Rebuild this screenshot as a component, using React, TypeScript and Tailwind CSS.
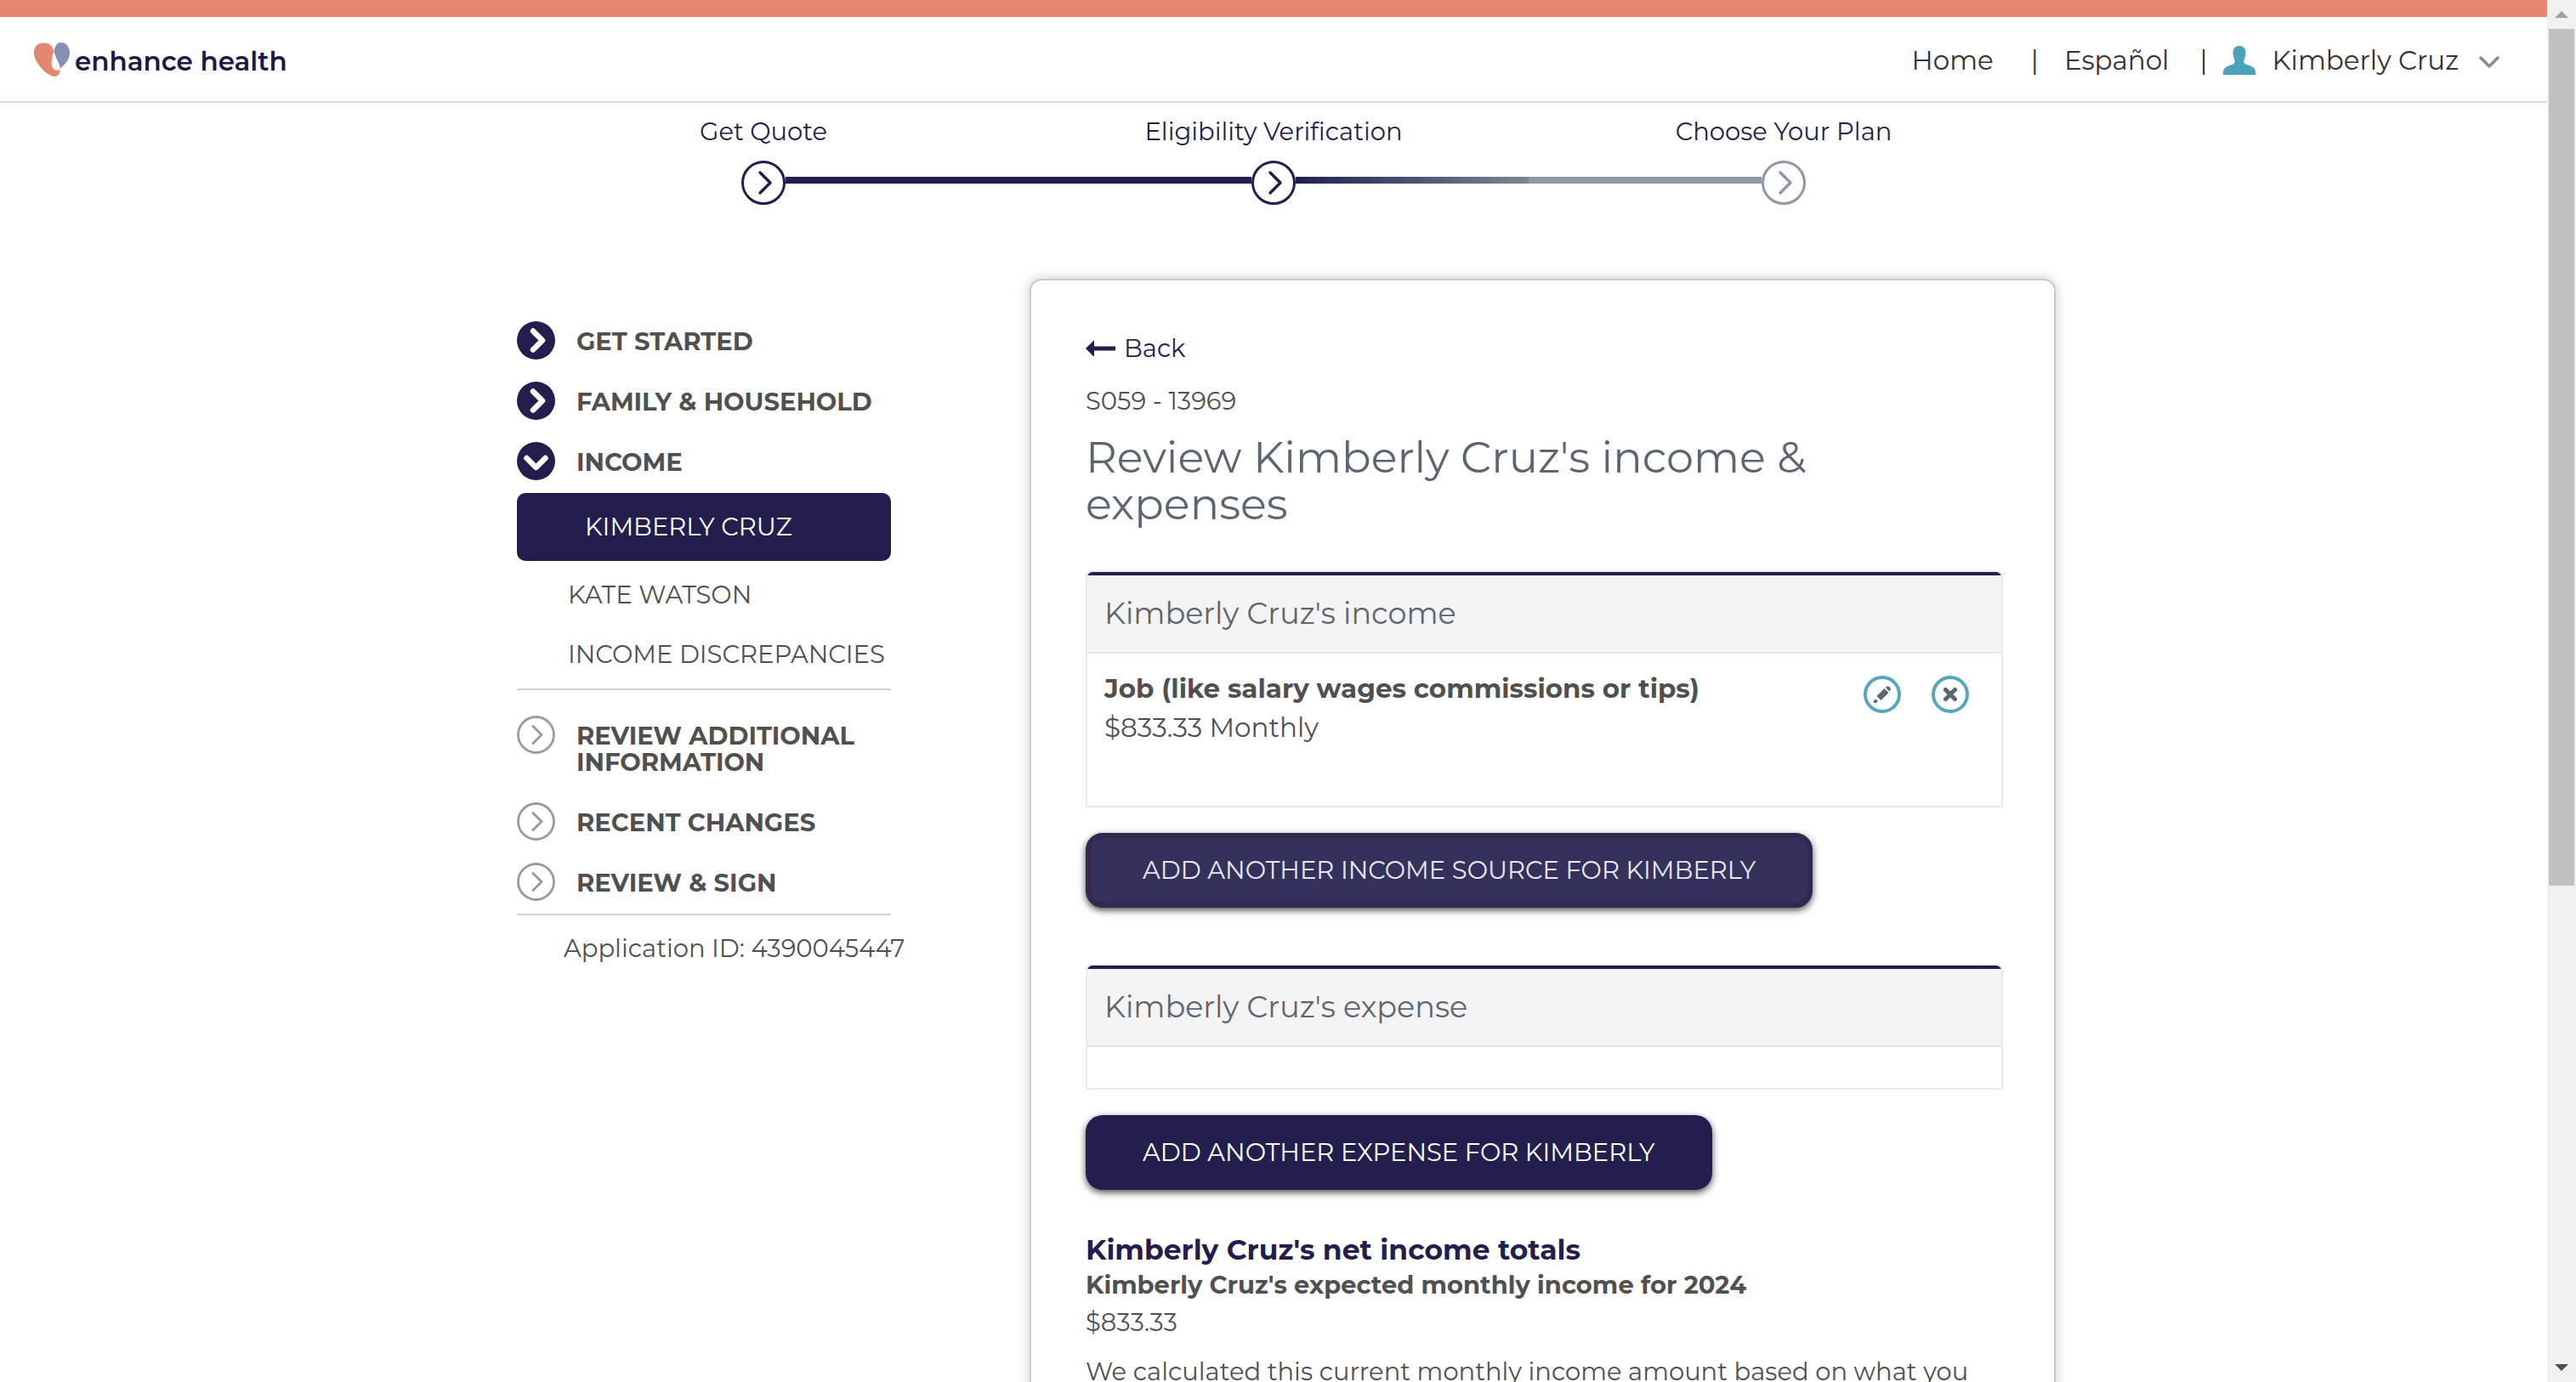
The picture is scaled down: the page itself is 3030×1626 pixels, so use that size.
import type { ReactNode } from 'react';

function Logo() {
  return (
    <a href="#" aria-label="enhance health" className="flex items-center gap-1.5">
      <svg viewBox="0 0 126 120" className="h-10 w-[42px]" aria-hidden="true">
        <path
          d="M70 30C64 12 54 2 40 2C14 0 0 12 0 36C0 66 34 108 66 119C82 123 93 112 92 95C88 98 83 99 78 98C66 96 61 84 62 68C63 50 67 40 70 30Z"
          fill="#e58672"
        />
        <path
          d="M94 0C80 0 74 14 71 29C71 46 88 66 93 92C104 80 126 66 126 36C126 14 112 0 94 0Z"
          fill="#888fb5"
        />
      </svg>
      <span className="pt-1 text-[31px] font-semibold leading-9 text-[#1b1848]">enhance health</span>
    </a>
  );
}

function UserIcon() {
  return (
    <svg viewBox="0 0 38 34" className="h-[34px] w-[38px]" aria-hidden="true">
      <path
        d="M19 0C23.500 0 26.500 3 26.500 8C26.500 12.500 25 14.500 24.500 17C24 20.500 25.500 21.500 29 22.500C35 24 38 27 38 31V34H0V31C0 27 3 24 9 22.500C12.500 21.500 14 20.500 13.500 17C13 14.500 11.500 12.500 11.500 8C11.500 3 14.500 0 19 0Z"
        fill="#4ba0ba"
      />
    </svg>
  );
}

function Header() {
  return (
    <header className="flex items-center justify-between border-t-[20px] border-b-2 border-t-[#e78571] border-b-[#d9d9d9] pr-14 pl-10">
      <Logo />
      <nav className="flex h-[99px] items-center pt-0.5 text-[31px] leading-9 text-[#333333]" aria-label="Account">
        <a href="#">Home</a>
        <span className="mr-[30px] ml-11">|</span>
        <a href="#">Español</a>
        <span className="mr-[18px] ml-9">|</span>
        <button type="button" className="flex items-center">
          <UserIcon />
          <span className="ml-5">Kimberly Cruz</span>
          <svg viewBox="0 0 24 16" className="mt-1 ml-6 h-4 w-6" fill="none" aria-hidden="true">
            <path d="M2 3L12 13L22 3" stroke="#8a8a8a" strokeWidth="3.500" strokeLinecap="round" strokeLinejoin="round" />
          </svg>
        </button>
      </nav>
    </header>
  );
}

function StepMarker({ color }: { color: string }) {
  return (
    <svg viewBox="0 0 52 52" className="h-[52px] w-[52px] shrink-0" fill="none" stroke={color} aria-hidden="true">
      <circle cx="26" cy="26" r="24.500" strokeWidth="3" />
      <path d="M22 14L34 26L22 38" strokeWidth="3.500" strokeLinecap="round" strokeLinejoin="round" />
    </svg>
  );
}

function Step({ label, color, left, right }: { label: string; color: string; left: string; right: string }) {
  return (
    <li className="text-center">
      <p className="leading-9">{label}</p>
      <div className="mt-4 flex items-start">
        <div className={`mt-[19px] h-2 flex-1 ${left}`} />
        <StepMarker color={color} />
        <div className={`mt-[19px] h-2 flex-1 ${right}`} />
      </div>
    </li>
  );
}

function Stepper() {
  return (
    <ol className="mx-auto grid w-full max-w-[1800px] grid-cols-3 pt-4 text-[29px] text-[#221f4e]">
      <Step label="Get Quote" color="#221f4e" left="" right="bg-[#221f4e]" />
      <Step
        label="Eligibility Verification"
        color="#221f4e"
        left="bg-[#221f4e]"
        right="bg-linear-to-r from-[#221f4e] to-[#808790]"
      />
      <Step label="Choose Your Plan" color="#8f99a5" left="bg-[#8f99a5]" right="" />
    </ol>
  );
}

function SectionIcon({ kind }: { kind: 'done' | 'open' | 'todo' }) {
  if (kind === 'todo') {
    return (
      <svg viewBox="0 0 45 45" className="h-[45px] w-[45px] shrink-0" fill="none" stroke="#9b9b9b" aria-hidden="true">
        <circle cx="22.500" cy="22.500" r="21" strokeWidth="2.800" />
        <path d="M19 12.500L29 22.500L19 32.500" strokeWidth="3" strokeLinecap="round" strokeLinejoin="round" />
      </svg>
    );
  }
  return (
    <svg viewBox="0 0 45 45" className="h-[45px] w-[45px] shrink-0" fill="none" aria-hidden="true">
      <circle cx="22.500" cy="22.500" r="22.500" fill="#221f4e" />
      <path
        d={kind === 'open' ? 'M11.500 19L22.500 30L33.500 19' : 'M19 11.500L30 22.500L19 33.500'}
        stroke="#fff"
        strokeWidth="6.500"
        strokeLinecap="round"
        strokeLinejoin="round"
      />
    </svg>
  );
}

function Section({ kind, children }: { kind: 'done' | 'open' | 'todo'; children: ReactNode }) {
  return (
    <a href="#" className="flex items-start gap-[25px] font-bold uppercase leading-[31px] text-[#505050]">
      <SectionIcon kind={kind} />
      <span className="pt-2 pb-1.5">{children}</span>
    </a>
  );
}

function Sidebar() {
  return (
    <aside className="w-[440px] shrink-0 pt-[50px] text-[29px] text-[#505050]">
      <nav aria-label="Application sections">
        <div className="flex flex-col gap-[26px]">
          <Section kind="done">Get Started</Section>
          <Section kind="done">Family &amp; Household</Section>
          <Section kind="open">Income</Section>
        </div>
        <a
          href="#"
          aria-current="page"
          className="mt-[15px] flex h-20 items-center rounded-[10px] bg-[#221f4e] pl-20 uppercase text-white"
        >
          Kimberly Cruz
        </a>
        <div className="border-b-2 border-[#d3d3d3] py-[5px] pl-[60px] uppercase leading-[70px] whitespace-nowrap">
          <a href="#" className="block">Kate Watson</a>
          <a href="#" className="block">Income Discrepancies</a>
        </div>
        <div className="flex flex-col gap-[26px] border-b-2 border-[#d3d3d3] pt-[30px] pb-[15px]">
          <Section kind="todo">Review Additional Information</Section>
          <Section kind="todo">Recent Changes</Section>
          <Section kind="todo">Review &amp; Sign</Section>
        </div>
      </nav>
      <p className="mt-[21px] pl-[55px] leading-9 whitespace-nowrap">Application ID: 4390045447</p>
    </aside>
  );
}

function Panel({ title, children }: { title: string; children?: ReactNode }) {
  return (
    <section className="overflow-hidden rounded-t-[8px] border-2 border-[#e6ebeb]">
      <h2 className="border-t-4 border-b-2 border-t-[#221f4e] border-b-[#e5e5e5] bg-[#f4f4f4] px-5 text-[35px] leading-[90px] text-[#5c6672]">
        {title}
      </h2>
      {children}
    </section>
  );
}

function EditIcon() {
  return (
    <svg viewBox="0 0 44 44" className="h-11 w-11" fill="none" aria-hidden="true">
      <circle cx="22" cy="22" r="20" stroke="#56a6bf" strokeWidth="4" />
      <path d="M15.500 24L24.500 15L29.500 20L20.500 29Z" fill="#5c6672" />
      <path d="M26 14L27.500 12.500Q29.500 12 31 13.500Q32.500 15 31.500 17L30.500 18.500Z" fill="#5c6672" />
      <path d="M14.500 27.500L12 29.500V32H14.500L17 30Z" fill="#5c6672" />
    </svg>
  );
}

function DeleteIcon() {
  return (
    <svg viewBox="0 0 44 44" className="h-11 w-11" fill="none" aria-hidden="true">
      <circle cx="22" cy="22" r="20" stroke="#56a6bf" strokeWidth="4" />
      <path d="M16.500 16.500L27.500 27.500M27.500 16.500L16.500 27.500" stroke="#5c6672" strokeWidth="5" strokeLinecap="round" />
    </svg>
  );
}

function IncomeCard() {
  return (
    <article className="min-w-0 flex-1 rounded-[14px] border-2 border-[#cacaca] pt-[62px] pr-[60px] pb-[200px] pl-16 text-[29px] text-[#505050] shadow-[0_0_14px_rgba(0,0,0,0.22)]">
      <a href="#" className="flex w-max items-center gap-2.5 leading-9 text-[#221f4e]">
        <svg viewBox="0 0 35 18" className="h-[18px] w-[35px]" aria-hidden="true">
          <path d="M0 9L9 0H10V6.500H35V11.500H10V18H9Z" fill="#221f4e" />
        </svg>
        Back
      </a>
      <p className="mt-[26px] leading-9">S059 - 13969</p>
      <h1 className="mt-[21px] mb-[50px] text-[51px] leading-[55px] text-[#5c6672]">
        Review Kimberly Cruz's income &amp; expenses
      </h1>

      <Panel title="Kimberly Cruz's income">
        <div className="flex items-start justify-between pr-[38px] pb-[69px] pl-5 text-[31px] leading-[46px]">
          <div className="pt-[18px]">
            <h3 className="font-bold">Job (like salary wages commissions or tips)</h3>
            <p>$833.33 Monthly</p>
          </div>
          <div className="flex gap-9 pt-[26px]">
            <button type="button" aria-label="Edit income">
              <EditIcon />
            </button>
            <button type="button" aria-label="Remove income">
              <DeleteIcon />
            </button>
          </div>
        </div>
      </Panel>
      <button
        type="button"
        className="mt-[30px] mb-[66px] block h-[88px] rounded-[20px] border-[6px] border-[#33284f] bg-[#34315c] px-[61px] uppercase text-[#e8e8ee] shadow-[0_3px_8px_rgba(0,0,0,0.7)]"
      >
        Add another income source for Kimberly
      </button>

      <Panel title="Kimberly Cruz's expense">
        <div className="h-12" />
      </Panel>
      <button
        type="button"
        className="mt-[30px] block h-[88px] rounded-[20px] bg-[#221f4e] px-[67px] uppercase text-white shadow-[0_3px_8px_rgba(0,0,0,0.7)]"
      >
        Add another expense for Kimberly
      </button>

      <h2 className="mt-[50px] text-[33px] font-bold leading-10 text-[#221f4e]">Kimberly Cruz's net income totals</h2>
      <div className="leading-11">
        <h3 className="font-bold">Kimberly Cruz's expected monthly income for 2024</h3>
        <p>$833.33</p>
        <p className="mt-3.5">We calculated this current monthly income amount based on what you</p>
      </div>
    </article>
  );
}

function Scrollbar() {
  return (
    <div className="flex w-[34px] shrink-0 flex-col items-center bg-[#f0f0f0]" aria-hidden="true">
      <div className="flex h-[34px] items-center">
        <svg viewBox="0 0 16 8" className="h-2 w-4">
          <path d="M8 0L16 8H0Z" fill="#a1a1a1" />
        </svg>
      </div>
      <div className="h-[62%] w-[30px] bg-[#c0c0c0]" />
      <div className="mt-auto flex h-[34px] items-center">
        <svg viewBox="0 0 16 8" className="h-2 w-4">
          <path d="M0 0H16L8 8Z" fill="#505050" />
        </svg>
      </div>
    </div>
  );
}

export default function App() {
  return (
    <div className="flex h-screen overflow-hidden bg-white font-[Montserrat,Inter,sans-serif]">
      <div className="min-w-0 flex-1 overflow-hidden">
        <Header />
        <Stepper />
        <main className="mx-auto flex max-w-[1840px] items-start gap-[163px] pt-[87px] pl-[30px]">
          <Sidebar />
          <IncomeCard />
        </main>
      </div>
      <Scrollbar />
    </div>
  );
}
